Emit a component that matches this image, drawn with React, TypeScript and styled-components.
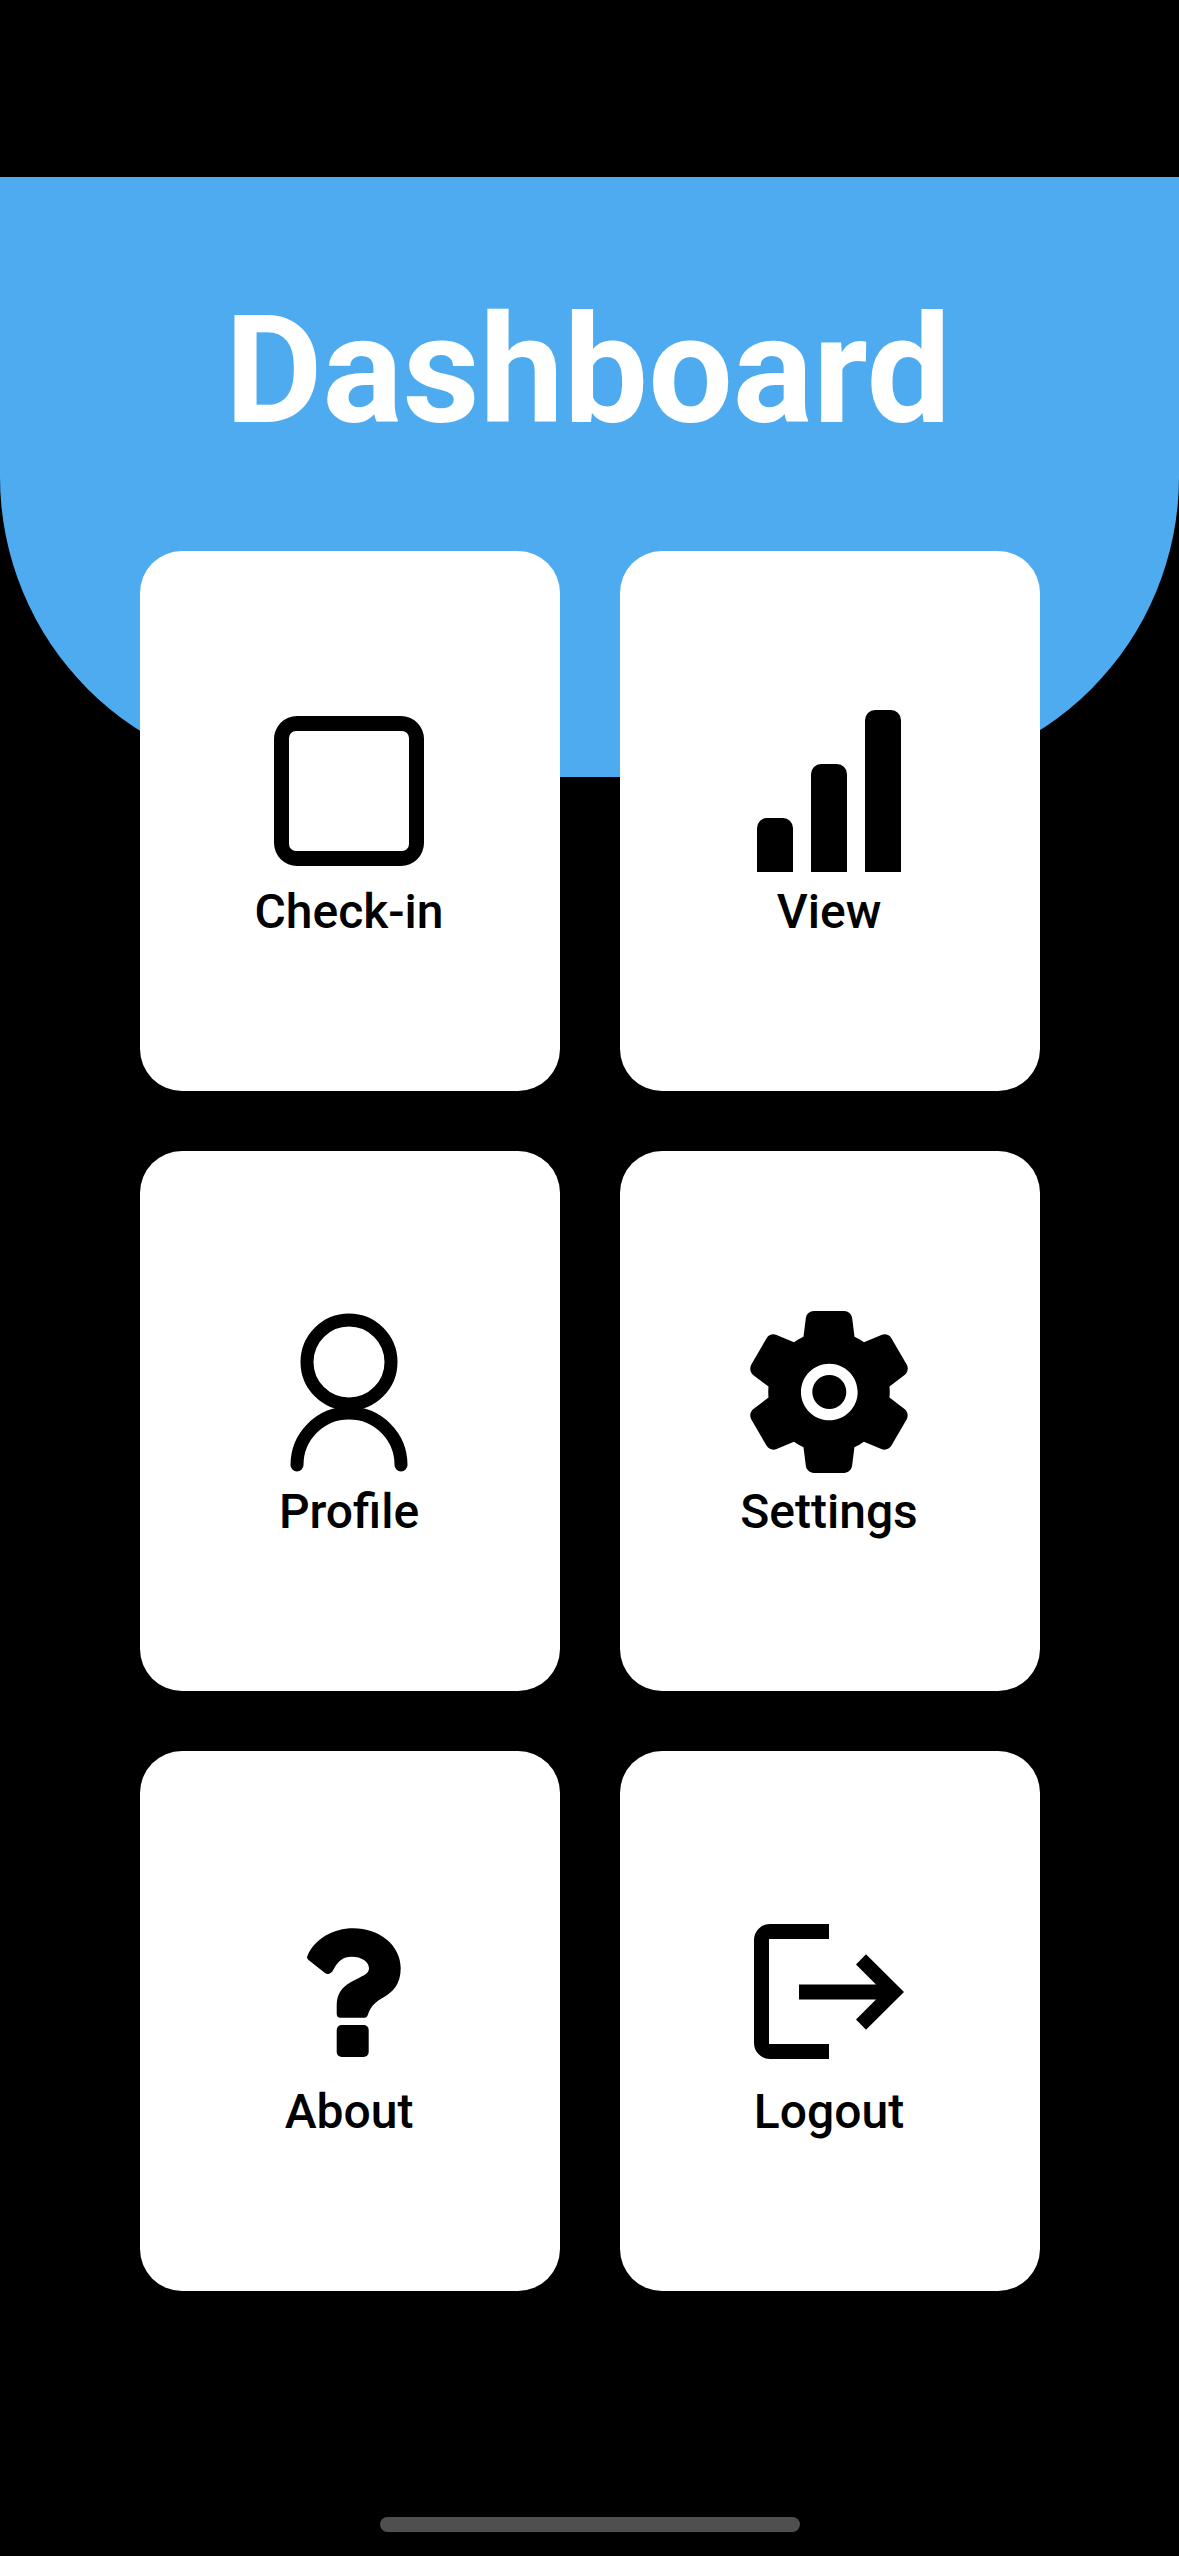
import React from "react";
import styled, { createGlobalStyle } from "styled-components";

const Global = createGlobalStyle`
  html, body { margin: 0; padding: 0; background: #000; }
  * { box-sizing: border-box; }
`;

const Page = styled.main`
  display: flex;
  flex-direction: column;
  align-items: center;
  width: 1179px;
  height: 2556px;
  padding-top: 177px;
  background: #000;
  font-family: Roboto, "Liberation Sans", sans-serif;
  overflow: hidden;
`;

const Hero = styled.header`
  width: 100%;
  height: 600px;
  padding: 106px 3px 0 0;
  background: #4eabf0;
  border-radius: 0 0 300px 300px;
  text-align: center;
`;

const Title = styled.h1`
  margin: 0;
  color: #fff;
  font-size: 150px;
  font-weight: 700;
  line-height: 176px;
`;

const Grid = styled.nav`
  display: grid;
  grid-template-columns: repeat(2, 420px);
  grid-auto-rows: 540px;
  gap: 60px;
  margin-top: -226px;
`;

const Card = styled.a`
  display: flex;
  flex-direction: column;
  align-items: center;
  justify-content: center;
  padding-bottom: 1px;
  background: #fff;
  border-radius: 42px;
  color: #000;
`;

const Icon = styled.svg`
  display: block;
  width: 180px;
  height: 180px;
  fill: #000;
`;

const Label = styled.span`
  margin-top: 3px;
  padding-right: 1px;
  font-size: 48px;
  font-weight: 500;
  line-height: 56px;
`;

const HomeBar = styled.div`
  width: 420px;
  height: 15px;
  margin-top: auto;
  margin-bottom: 24px;
  border-radius: 8px;
  background: #4f4f4f;
`;

const icons: Record<string, React.ReactNode> = {
  "Check-in": (
    <path
      fillRule="evenodd"
      d="M37 15H141A23 23 0 0 1 164 38V142A23 23 0 0 1 141 165H37A23 23 0 0 1 14 142V38A23 23 0 0 1 37 15ZM36 30A7 7 0 0 0 29 37V143A7 7 0 0 0 36 150H142A7 7 0 0 0 149 143V37A7 7 0 0 0 142 30Z"
    />
  ),
  View: (
    <>
      <path d="M17 171V127A10 10 0 0 1 27 117H43A10 10 0 0 1 53 127V171Z" />
      <path d="M71 171V73A10 10 0 0 1 81 63H97A10 10 0 0 1 107 73V171Z" />
      <path d="M125 171V19A10 10 0 0 1 135 9H151A10 10 0 0 1 161 19V171Z" />
    </>
  ),
  Profile: (
    <g fill="none" stroke="#000" strokeWidth="13" strokeLinecap="round">
      <circle cx="89" cy="61" r="42" />
      <path d="M37 164A52 52 0 0 1 141 164" />
    </g>
  ),
  Settings: (
    <>
      <path
        transform="translate(-8.2 -6.2) scale(8.1)"
        d="M19.5 12c0-.23-.01-.45-.03-.68l1.86-1.41c.4-.3.51-.86.26-1.3l-1.87-3.23c-.25-.44-.79-.62-1.25-.42l-2.15.91c-.37-.26-.76-.49-1.17-.68l-.29-2.31c-.06-.5-.49-.88-.99-.88h-3.73c-.51 0-.94.38-1 .88l-.29 2.31c-.41.19-.8.42-1.17.68l-2.15-.91c-.46-.2-1-.02-1.25.42L2.41 8.62c-.25.44-.14.99.26 1.3l1.86 1.41c-.02.22-.03.44-.03.67s.01.45.03.68l-1.86 1.41c-.4.3-.51.86-.26 1.3l1.87 3.23c.25.44.79.62 1.25.42l2.15-.91c.37.26.76.49 1.17.68l.29 2.31c.06.5.49.88.99.88h3.73c.5 0 .93-.38.99-.88l.29-2.31c.41-.19.8-.42 1.17-.68l2.15.91c.46.2 1 .02 1.25-.42l1.87-3.23c.25-.44.14-.99-.26-1.3l-1.86-1.41c.03-.23.04-.45.04-.68zm-7.46 3.5c-1.93 0-3.5-1.57-3.5-3.5s1.57-3.5 3.5-3.5 3.5 1.57 3.5 3.5-1.57 3.5-3.5 3.5z"
      />
      <circle cx="89.3" cy="91" r="17" />
    </>
  ),
  About: (
    <>
      <path d="M48.5 59C46.8 57.5 46.6 55.8 47.8 54C55 38 73 27.3 93.3 27.3C119 27.3 140.7 44 140.7 67.3C140.7 83 133 91 123.3 96.5C116 100.5 111.5 104.5 108.5 112C107.5 115.5 106.5 116.7 104 116.7H80.5C78 116.7 76.7 115.2 76.7 112.7V104C76.7 93 82 86 91 81C102 75 109 73.5 109 67.3C109 60.5 101.5 55.7 91.7 55.7C83 55.7 78 60 73.5 68.5C71.5 72.5 68 74.5 65 72Z" />
      <rect x="76.7" y="124" width="32" height="32" rx="5" />
    </>
  ),
  Logout: (
    <>
      <path d="M89 23H30A16 16 0 0 0 14 39V142A16 16 0 0 0 30 158H89V143H29V38H89Z" />
      <path d="M59 83.5H136L116 63.5L126 53.3L164 91L126 128.7L116 118.5L136 98.5H59Z" />
    </>
  ),
};

const items = ["Check-in", "View", "Profile", "Settings", "About", "Logout"];

export default function App() {
  return (
    <Page>
      <Global />
      <Hero>
        <Title>Dashboard</Title>
      </Hero>
      <Grid>
        {items.map((name) => (
          <Card key={name}>
            <Icon viewBox="0 0 180 180">{icons[name]}</Icon>
            <Label>{name}</Label>
          </Card>
        ))}
      </Grid>
      <HomeBar />
    </Page>
  );
}
